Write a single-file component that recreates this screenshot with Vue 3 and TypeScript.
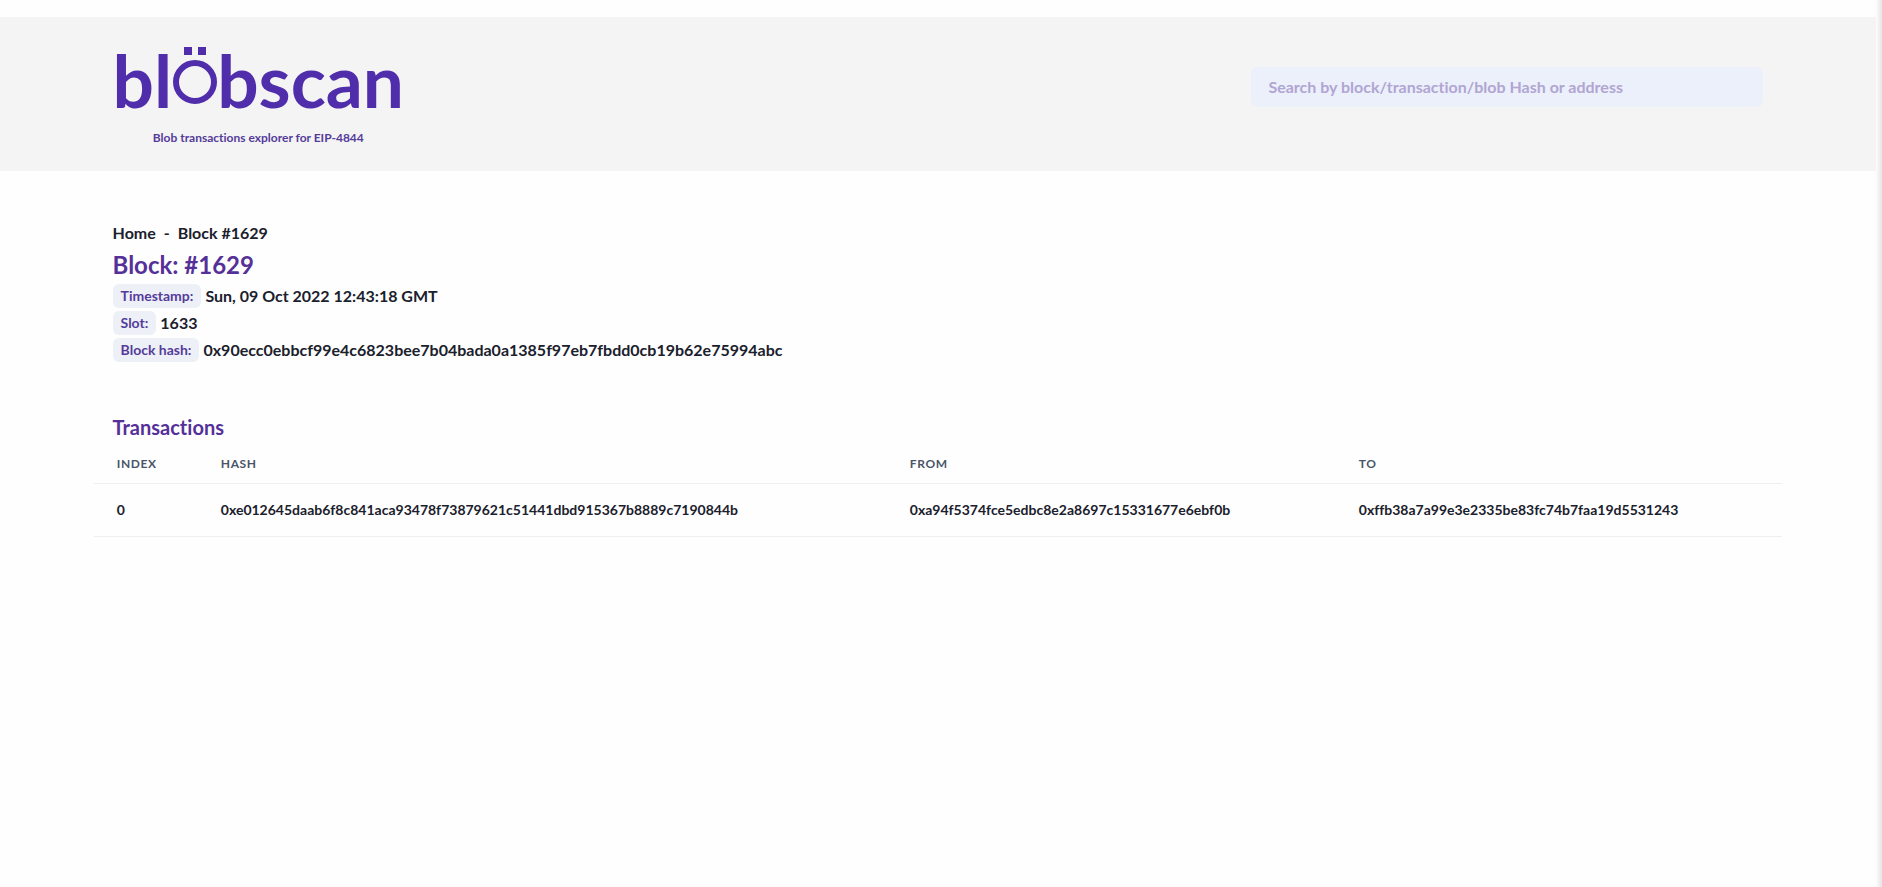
<script setup lang="ts">
import { ref } from 'vue'

interface Transaction {
  index: number
  hash: string
  from: string
  to: string
}

const query = ref('')

const details: { label: string; value: string }[] = [
  { label: 'Timestamp:', value: 'Sun, 09 Oct 2022 12:43:18 GMT' },
  { label: 'Slot:', value: '1633' },
  { label: 'Block hash:', value: '0x90ecc0ebbcf99e4c6823bee7b04bada0a1385f97eb7fbdd0cb19b62e75994abc' },
]

const transactions: Transaction[] = [
  {
    index: 0,
    hash: '0xe012645daab6f8c841aca93478f73879621c51441dbd915367b8889c7190844b',
    from: '0xa94f5374fce5edbc8e2a8697c15331677e6ebf0b',
    to: '0xffb38a7a99e3e2335be83fc74b7faa19d5531243',
  },
]
</script>

<template>
  <div class="page">
    <header class="header">
      <div class="brand">
        <a class="logo" href="#" aria-label="blobscan">
          <span>bl</span>
          <svg class="logo-o" viewBox="0 0 44 60" aria-hidden="true">
            <rect x="11" y="1" width="8" height="8" />
            <rect x="25" y="1" width="8" height="8" />
            <circle cx="22" cy="36" r="19" />
          </svg>
          <span>bscan</span>
        </a>
        <p class="tagline">Blob transactions explorer for EIP-4844</p>
      </div>
      <form class="search" @submit.prevent>
        <input
          v-model="query"
          type="text"
          aria-label="Search"
          placeholder="Search by block/transaction/blob Hash or address"
        />
      </form>
    </header>

    <main class="main">
      <nav class="crumbs" aria-label="Breadcrumb">
        <a href="#">Home</a>
        <span>-</span>
        <a href="#">Block #1629</a>
      </nav>
      <h1>Block: #1629</h1>
      <dl class="details">
        <div v-for="d in details" :key="d.label" class="detail">
          <dt>{{ d.label }}</dt>
          <dd>{{ d.value }}</dd>
        </div>
      </dl>

      <h2>Transactions</h2>
    </main>
    <table class="table">
      <thead>
        <tr>
          <th class="col-index" scope="col">Index</th>
          <th class="col-hash" scope="col">Hash</th>
          <th class="col-from" scope="col">From</th>
          <th class="col-to" scope="col">To</th>
        </tr>
      </thead>
      <tbody>
        <tr v-for="t in transactions" :key="t.hash">
          <td>{{ t.index }}</td>
          <td>{{ t.hash }}</td>
          <td>{{ t.from }}</td>
          <td>{{ t.to }}</td>
        </tr>
      </tbody>
    </table>
  </div>
</template>

<style>
body {
  background: #fefefe;
}
</style>

<style scoped>
.page {
  box-sizing: border-box;
  min-height: 100vh;
  padding: 17px 6px 0 0;
  background: linear-gradient(to left, #e6e6e6, #f8f8f8 5px, #fefefe 6px);
  color: #1a202c;
  font-family: Lato, sans-serif;
  font-size: 16px;
  font-weight: 700;
  font-variant-ligatures: none;
  line-height: 24px;
}

a {
  color: inherit;
  text-decoration: none;
}

.header {
  display: flex;
  justify-content: space-between;
  align-items: flex-start;
  padding: 28px 6% 24px;
  background: #f4f4f4;
}

.brand {
  display: flex;
  flex-direction: column;
  align-items: center;
  color: #502eab;
}

.logo {
  display: flex;
  align-items: flex-start;
  font-size: 73px;
  line-height: 70px;
}

.logo-o {
  width: 44px;
  height: 60px;
  margin: 1px 0 0 1px;
  fill: #502eab;
}

.logo-o circle {
  fill: none;
  stroke: #502eab;
  stroke-width: 6;
}

.tagline {
  margin: 14px 0 0;
  color: #553c9a;
  font-size: 12px;
  line-height: 18px;
}

.search {
  flex: 0 0 512px;
  margin-top: 22px;
}

.search input {
  box-sizing: border-box;
  width: 100%;
  height: 40px;
  padding: 0 17px 2px;
  border: 0;
  border-radius: 6px;
  outline: none;
  background: #ebf0fa;
  color: #553c9a;
  font: inherit;
}

.search input::placeholder {
  color: #b1a5d3;
  opacity: 1;
}

.main {
  padding: 50px 6% 0;
}

.crumbs {
  display: flex;
  gap: 8px;
}

h1 {
  margin: 4px 0 3px;
  color: #553099;
  font-size: 24px;
  line-height: 32px;
}

.details {
  display: flex;
  flex-direction: column;
  gap: 3px;
  margin: 0;
}

.detail {
  display: flex;
  align-items: center;
  gap: 4px;
}

dt {
  padding: 0 8px;
  border-radius: 6px;
  background: #edf0f7;
  color: #553c9a;
  font-size: 14px;
}

dd {
  margin: 0;
}

h2 {
  margin: 49px 0 0;
  color: #553099;
  font-size: 20px;
  line-height: 32px;
}

.table {
  width: 90%;
  margin: 0 5%;
  border-collapse: collapse;
  table-layout: fixed;
}

th,
td {
  box-sizing: border-box;
  padding: 0 0 0 23px;
  border-bottom: 1px solid #edf0f2;
  text-align: left;
}

th {
  height: 40px;
  padding-top: 2px;
  color: #4a5568;
  font-size: 12px;
  letter-spacing: 0.6px;
  line-height: 16px;
  text-transform: uppercase;
}

td {
  height: 53px;
  font-size: 14px;
}

.col-index {
  width: 104px;
}

.col-hash {
  width: 689px;
}

.col-from {
  width: 449px;
}
</style>
